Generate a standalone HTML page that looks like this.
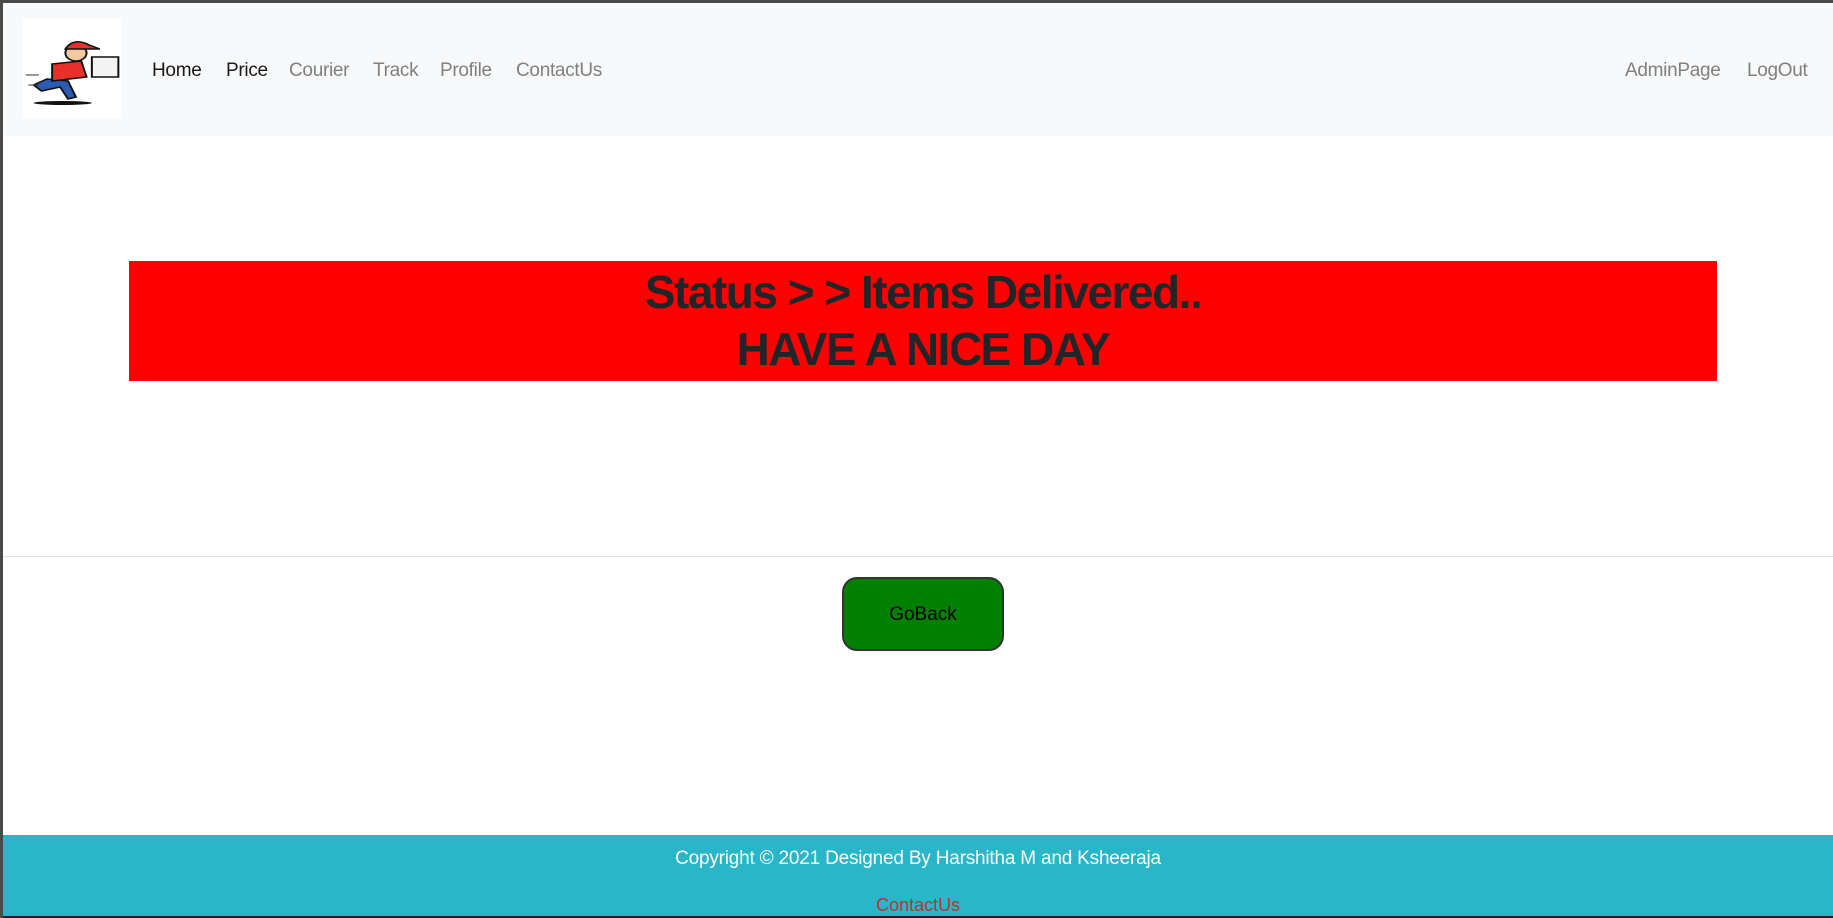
<!DOCTYPE html>
<html><head><meta charset="utf-8">
<style>
*{margin:0;padding:0;box-sizing:border-box}
html,body{width:1833px;height:918px;overflow:hidden;background:#fff;font-family:"Liberation Sans",sans-serif}
body{position:relative;border-top:3px solid #4a4a4a;border-left:3px solid #4a4a4a}
.nav{position:absolute;left:0;top:0;width:1830px;height:133px;background:#f8f9fa}
.logo{position:absolute;left:20px;top:16px;width:98px;height:100px;background:#fff}
.nav a{position:absolute;top:57px;font-size:19px;color:#808080;text-decoration:none;letter-spacing:-0.3px}
.nav a.d{color:#1a1a1a}
.red{position:absolute;left:126px;top:258px;width:1588px;height:120px;background:#ff0000;text-align:center;color:#212529;font-weight:bold;font-size:46px;line-height:57px;padding-top:3px;letter-spacing:-1.5px}
.hr{position:absolute;left:0;top:553px;width:1830px;height:1px;background:#e2e2e2}
.btn{position:absolute;left:839px;top:574px;width:162px;height:74px;background:#008000;border:2px solid #333;border-radius:15px;font-size:19px;color:#000;text-align:center;line-height:72px}
.foot{position:absolute;left:0;top:832px;width:1830px;height:81px;background:#29b6c9;text-align:center}
.foot .c{position:absolute;left:0;width:100%;top:13px;color:#fff;font-size:19px;letter-spacing:-0.2px}
.foot .k{position:absolute;left:0;width:100%;top:60px;color:#c0302a;font-size:18px}
.bot{position:absolute;left:0;top:913px;width:1830px;height:5px;background:#222}
</style></head><body>
<div class="nav">
 <div class="logo">
  <svg width="98" height="100" viewBox="0 0 74 100" preserveAspectRatio="none">
   <ellipse cx="30" cy="84" rx="22" ry="2" fill="#111"/>
   <path d="M18 60 L34 62 L40 78 L34 80 L28 68 L14 72 L8 66 Z" fill="#2a5bb0" stroke="#111" stroke-width="1.5"/>
   <path d="M22 45 L44 42 L48 58 L22 62 Z" fill="#e8302a" stroke="#111" stroke-width="1.5"/>
   <circle cx="40" cy="34" r="8" fill="#f4c9a0" stroke="#111" stroke-width="1.5"/>
   <path d="M32 30 Q38 18 50 26 L58 30 L48 30 Z" fill="#e8302a" stroke="#111" stroke-width="1.5"/>
   <rect x="52" y="38" width="20" height="20" fill="#f4f4f4" stroke="#111" stroke-width="1.5"/>
   <line x1="2" y1="56" x2="12" y2="56" stroke="#333"/><line x1="4" y1="66" x2="12" y2="66" stroke="#333"/>
  </svg>
 </div>
 <a class="d" style="left:149px">Home</a>
 <a class="d" style="left:223px">Price</a>
 <a style="left:286px">Courier</a>
 <a style="left:370px">Track</a>
 <a style="left:437px">Profile</a>
 <a style="left:513px">ContactUs</a>
 <a style="left:1622px">AdminPage</a>
 <a style="left:1744px">LogOut</a>
</div>
<div class="red">Status &gt; &gt; Items Delivered..<br>HAVE A NICE DAY</div>
<div class="hr"></div>
<div class="btn">GoBack</div>
<div class="foot"><div class="c">Copyright © 2021 Designed By Harshitha M and Ksheeraja</div><div class="k">ContactUs</div></div>
<div class="bot"></div>
</body></html>
